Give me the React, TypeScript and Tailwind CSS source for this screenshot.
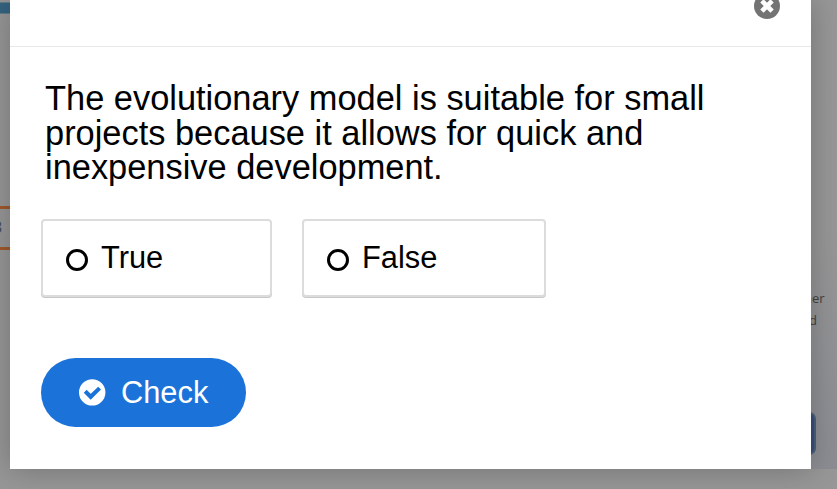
function CloseIcon() {
  return (
    <svg viewBox="0 0 26 26" className="size-[26px]">
      <circle cx="13" cy="13" r="13" fill="#737373" />
      <path d="M7.9 7.9 L18.1 18.1 M18.1 7.9 L7.9 18.1" stroke="#fff" strokeWidth="4.7" />
    </svg>
  );
}

function CheckIcon() {
  return (
    <svg viewBox="0 0 27 27" className="size-[27px]">
      <circle cx="13.2" cy="13.4" r="13.2" fill="#fff" />
      <path d="M6.2 12.3 L11.7 17.8 L20.6 9.1" fill="none" stroke="#1b73d9" strokeWidth="4.1" />
    </svg>
  );
}

function Option({ label, width }: { label: string; width: string }) {
  return (
    <button
      className={`flex h-[78px] items-center rounded-[4px] border-2 border-[#dcdcdc] bg-white pl-[23px] shadow-[0_1px_0_#c8c8c8] ${width}`}
    >
      <span className="mt-[5px] size-[22px] rounded-full border-[3px] border-black" />
      <span className="ml-[13px] text-[30.8px] leading-9">{label}</span>
    </button>
  );
}

export default function App() {
  return (
    <div className="flex h-[489px] w-[837px] overflow-hidden bg-[#979797] font-['Liberation_Sans',Arial,sans-serif] text-black">
      <aside className="flex w-[10px] shrink-0 flex-col overflow-hidden">
        <div className="mt-[2px] h-[12px] border-y border-[#607c8b] bg-[#356481]" />
        <div className="mt-[192px] flex h-[44px] items-center border-y-[3px] border-[#a0592b]">
          <span className="-ml-[7px] text-[16px] font-bold text-[#50505c]">3</span>
        </div>
      </aside>
      <main className="relative z-10 flex h-[469px] w-[801px] shrink-0 flex-col bg-white shadow-[0_0_30px_rgba(0,0,0,0.25)]">
        <header className="flex h-[47px] shrink-0 justify-end border-b border-[#e8e8e8] pr-[31px]">
          <button aria-label="Close" className="-mt-[7px] h-[26px]">
            <CloseIcon />
          </button>
        </header>
        <section className="flex flex-col items-start pl-[31px]">
          <p className="mt-[34px] ml-[4px] text-[34.4px] leading-[34.5px] whitespace-nowrap">
            The evolutionary model is suitable for small
            <br />
            projects because it allows for quick and
            <br />
            inexpensive development.
          </p>
          <div className="mt-[34px] flex gap-[30px]">
            <Option label="True" width="w-[231px]" />
            <Option label="False" width="w-[244px]" />
          </div>
          <button className="mt-[61px] flex h-[69px] w-[205px] items-center rounded-full bg-[#1b73d9] pl-[38px] text-white">
            <CheckIcon />
            <span className="mt-[2px] ml-[15px] text-[30.8px] leading-9">Check</span>
          </button>
        </section>
      </main>
      <aside className="flex h-[469px] w-[26px] shrink-0 flex-col overflow-hidden bg-linear-to-b from-[#979797] from-50% to-[#8b8d93]">
        <div className="mt-[287px] -ml-[7px] font-['Open_Sans',sans-serif] text-[13px] leading-[22px] font-medium text-[#424242]">
          <p>her</p>
          <p className="ml-[5px]">d</p>
        </div>
        <div className="mt-[81px] -ml-[15px] h-[43px] w-[20px] rounded-[7px] border-2 border-[#4b607e] bg-[#395078]" />
      </aside>
    </div>
  );
}
